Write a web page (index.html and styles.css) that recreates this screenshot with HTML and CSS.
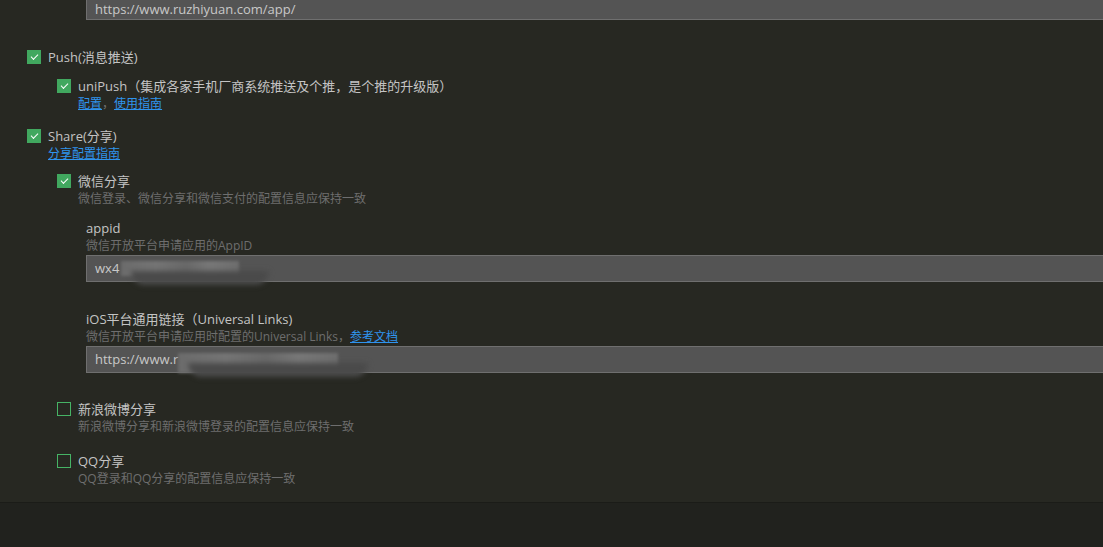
FILE: index.html
```html
<!DOCTYPE html>
<html lang="zh-CN">
<head>
  <meta charset="UTF-8">
  <title>App模块配置</title>
  <link rel="stylesheet" href="styles.css">
</head>
<body>
  <div class="settings">
    <div class="field field-top">
      <div class="input">https://www.ruzhiyuan.com/app/</div>
    </div>

    <!-- Push -->
    <div class="module push">
      <div class="option">
        <span class="check checked"></span>
        <span class="label">Push(消息推送)</span>
      </div>
      <div class="sub">
        <div class="option">
          <span class="check checked"></span>
          <span class="label">uniPush（集成各家手机厂商系统推送及个推，是个推的升级版）</span>
        </div>
        <div class="links"><a href="#">配置</a><span class="sep">，</span><a href="#">使用指南</a></div>
      </div>
    </div>

    <!-- Share -->
    <div class="module share">
      <div class="option">
        <span class="check checked"></span>
        <span class="label">Share(分享)</span>
      </div>
      <div class="links"><a href="#">分享配置指南</a></div>

      <div class="sub">
        <div class="option">
          <span class="check checked"></span>
          <span class="label">微信分享</span>
        </div>
        <div class="desc">微信登录、微信分享和微信支付的配置信息应保持一致</div>

        <div class="field">
          <div class="field-title">appid</div>
          <div class="desc">微信开放平台申请应用的AppID</div>
          <div class="input">wx4<span class="masked masked-id"></span></div>
        </div>

        <div class="field field-links">
          <div class="field-title">iOS平台通用链接（Universal Links)</div>
          <div class="desc">微信开放平台申请应用时配置的Universal Links，<a href="#">参考文档</a></div>
          <div class="input">https://www.r<span class="masked masked-url"></span></div>
        </div>

        <div class="option option-sina">
          <span class="check"></span>
          <span class="label">新浪微博分享</span>
        </div>
        <div class="desc">新浪微博分享和新浪微博登录的配置信息应保持一致</div>

        <div class="option option-qq">
          <span class="check"></span>
          <span class="label">QQ分享</span>
        </div>
        <div class="desc">QQ登录和QQ分享的配置信息应保持一致</div>
      </div>
    </div>
  </div>

  <div class="footer"></div>
</body>
</html>
```

FILE: styles.css
```css
/* General */
html, body {
  margin: 0;
  padding: 0;
  height: 100%;
  overflow: hidden;
}

body {
  background-color: #272822;
  color: #c4c4c4;
  font-family: "Open Sans", "Noto Sans CJK SC", sans-serif;
  font-size: 13px;
  display: flex;
  flex-direction: column;
}

.settings {
  height: 503px;
  padding-left: 27px;
  box-sizing: border-box;
  border-bottom: 1px solid #1b1c18;
}

.footer {
  flex: 1;
  background-color: #21221e;
}

/* Checkbox rows */
.option {
  display: flex;
  align-items: center;
  gap: 7px;
  height: 18px;
  line-height: 18px;
}

.check {
  width: 14px;
  height: 14px;
  box-sizing: border-box;
  border: 1px solid #46b365;
  position: relative;
  flex-shrink: 0;
}

.check.checked {
  background-color: #41a85f;
  border-color: #41a85f;
}

.check.checked::after {
  content: "";
  position: absolute;
  left: 3px;
  top: 2.5px;
  width: 6px;
  height: 3px;
  border-left: 1.5px solid #fff;
  border-bottom: 1.5px solid #fff;
  transform: rotate(-45deg);
}

.label {
  white-space: nowrap;
}

.links {
  padding-left: 21px;
  line-height: 18px;
  font-size: 12px;
}

a {
  color: #2f94ee;
  text-decoration: underline;
}

.sep {
  color: #707070;
}

.desc {
  padding-left: 21px;
  font-size: 12px;
  line-height: 18px;
  color: #6e6e6e;
  white-space: nowrap;
}

.sub {
  padding-left: 30px;
}

/* Sections spacing */
.push {
  margin-top: 28px;
}

.push .sub {
  margin-top: 11px;
}

.share {
  margin-top: 14px;
}

.share .sub {
  margin-top: 9px;
}

/* Text fields */
.field {
  padding-left: 29px;
  margin-top: 11px;
}

.field .desc {
  padding-left: 0;
}

.field-links {
  margin-top: 28px;
}

.field-title {
  line-height: 18px;
}

.input {
  margin-right: -40px;
  height: 27px;
  box-sizing: border-box;
  background-color: #545454;
  border: 1px solid #6f6f6f;
  padding-left: 8px;
  line-height: 25px;
  color: #c8c8c8;
  white-space: nowrap;
  display: flex;
  align-items: center;
}

.field-top {
  margin-top: 0;
  padding-left: 59px;
}

.field-top .input {
  height: 20px;
  line-height: 18px;
  border-top: none;
  align-items: flex-start;
  padding-top: 0;
}

/* Blurred (masked) values */
.masked {
  display: inline-block;
  height: 15px;
  background: linear-gradient(90deg, #6b6b6b 0%, #747474 30%, #686868 55%, #777 75%, #6d6d6d 100%);
  filter: blur(1.5px);
  position: relative;
}

.masked::after {
  content: "";
  position: absolute;
  left: 10px;
  right: -30px;
  top: 10px;
  height: 14px;
  border-radius: 0 0 40px 40px;
  background-color: #4a4a4a;
  filter: blur(2px);
  z-index: -1;
}

.masked-id {
  width: 118px;
  margin-left: 2px;
}

.masked-url {
  width: 160px;
  height: 20px;
  margin-top: 6px;
}

.option-sina {
  margin-top: 27px;
}

.option-qq {
  margin-top: 16px;
}
```
